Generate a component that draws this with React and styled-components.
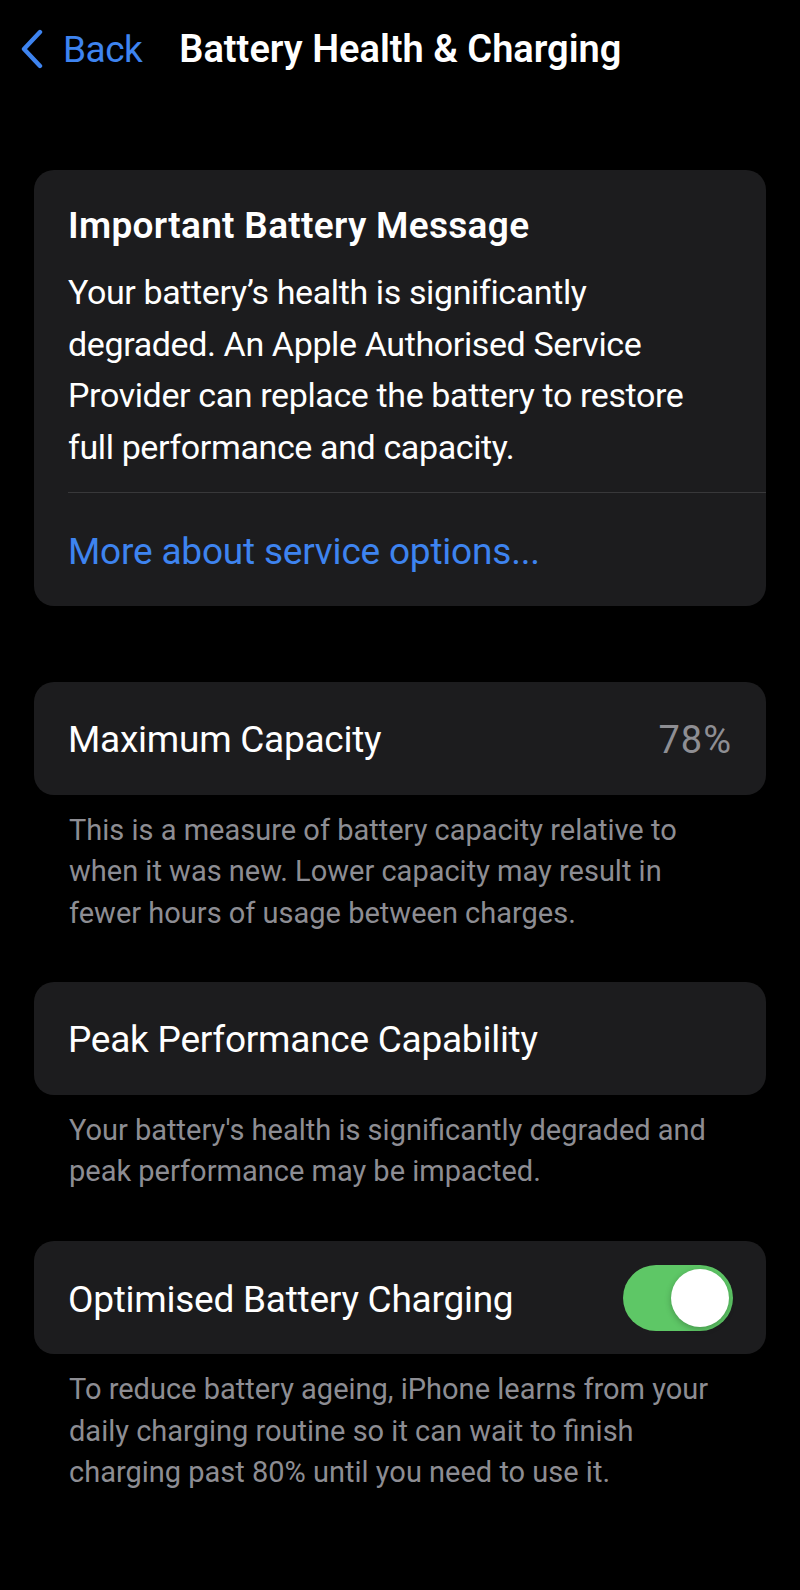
import React, { useState } from "react";
import styled, { createGlobalStyle } from "styled-components";

const GlobalStyle = createGlobalStyle`
  html, body {
    margin: 0;
    padding: 0;
    background: #000;
  }
  body {
    font-family: Roboto, "Noto Sans", sans-serif;
    color: #fff;
    -webkit-font-smoothing: antialiased;
  }
`;

const Page = styled.div`
  min-height: 1590px;
  background: #000;
  display: flex;
  flex-direction: column;
`;

const NavBar = styled.div`
  display: flex;
  align-items: center;
  height: 98px;
  padding-left: 20px;
`;

const BackButton = styled.button`
  display: flex;
  align-items: center;
  gap: 19px;
  background: none;
  border: 0;
  padding: 0;
  color: #3e84f0;
  font-family: inherit;
  font-size: 37px;
  letter-spacing: -0.5px;
  cursor: pointer;
`;

const NavTitle = styled.div`
  margin-left: 37px;
  font-size: 38px;
  font-weight: 600;
  color: #fff;
`;

const Content = styled.div`
  display: flex;
  flex-direction: column;
  padding: 72px 34px 0;
`;

const Card = styled.div`
  background: #1c1c1e;
  border-radius: 20px;
  margin-top: ${(p) => p.$top || 0}px;
`;

const MessageBody = styled.div`
  padding: 36px 0 28px 34px;
`;

const MessageTitle = styled.div`
  font-size: 37px;
  font-weight: 600;
  line-height: 40px;
  letter-spacing: 0.3px;
  padding-right: 40px;
`;

const MessageText = styled.div`
  margin-top: 21px;
  font-size: 34px;
  line-height: 51.5px;
  letter-spacing: -0.38px;
  padding-right: 58px;
`;

const Separator = styled.div`
  height: 1px;
  background: #38383a;
  margin: 19px 0 33px;
`;

const LinkText = styled.a`
  display: block;
  font-size: 37px;
  line-height: 51.5px;
  letter-spacing: -0.2px;
  color: #3e84f0;
  text-decoration: none;
`;

const Row = styled.div`
  display: flex;
  align-items: center;
  justify-content: space-between;
  height: 113px;
  padding: 0 33px 0 34px;
  box-sizing: border-box;
`;

const RowLabel = styled.div`
  font-size: 37px;
  letter-spacing: -0.25px;
  padding-top: 3px;
`;

const RowValue = styled.div`
  font-size: 38px;
  letter-spacing: 1px;
  color: #8e8e93;
  padding-top: 3px;
  margin-right: 1px;
`;

const Footer = styled.div`
  margin-top: 15px;
  padding: 0 30px 0 35px;
  font-size: 29px;
  line-height: 41.7px;
  letter-spacing: 0;
  color: #8d8d93;
`;

const Track = styled.button`
  position: relative;
  width: 110px;
  height: 66px;
  border-radius: 33px;
  border: 0;
  padding: 0;
  background: ${(p) => (p.$on ? "#5ec766" : "#39393d")};
  cursor: pointer;
  flex-shrink: 0;
`;

const Knob = styled.span`
  position: absolute;
  top: 4px;
  left: ${(p) => (p.$on ? "48px" : "4px")};
  width: 58px;
  height: 58px;
  border-radius: 50%;
  background: #fff;
  box-shadow: 0 2px 6px rgba(0, 0, 0, 0.25);
  transition: left 0.2s;
`;

const Chevron = () => (
  <svg width="24" height="40" viewBox="0 0 24 40" fill="none">
    <polyline
      points="20,3 4,20 20,37"
      stroke="#3e84f0"
      strokeWidth="4.4"
      strokeLinecap="round"
      strokeLinejoin="round"
    />
  </svg>
);

const Toggle = ({ on, onChange }) => (
  <Track $on={on} onClick={() => onChange(!on)}>
    <Knob $on={on} />
  </Track>
);

const App = () => {
  const [optimised, setOptimised] = useState(true);

  return (
    <>
      <GlobalStyle />
      <Page>
        <NavBar>
          <BackButton>
            <Chevron />
            Back
          </BackButton>
          <NavTitle>Battery Health &amp; Charging</NavTitle>
        </NavBar>

        <Content>
          <Card>
            <MessageBody>
              <MessageTitle>Important Battery Message</MessageTitle>
              <MessageText>
                Your battery’s health is significantly degraded. An Apple
                Authorised Service Provider can replace the battery to restore
                full performance and capacity.
              </MessageText>
              <Separator />
              <LinkText href="#">More about service options...</LinkText>
            </MessageBody>
          </Card>

          <Card $top={76}>
            <Row>
              <RowLabel>Maximum Capacity</RowLabel>
              <RowValue>78%</RowValue>
            </Row>
          </Card>
          <Footer>
            This is a measure of battery capacity relative to when it was new.
            Lower capacity may result in fewer hours of usage between charges.
          </Footer>

          <Card $top={47}>
            <Row>
              <RowLabel>Peak Performance Capability</RowLabel>
            </Row>
          </Card>
          <Footer>
            Your battery's health is significantly degraded and peak
            performance may be impacted.
          </Footer>

          <Card $top={48}>
            <Row>
              <RowLabel>Optimised Battery Charging</RowLabel>
              <Toggle on={optimised} onChange={setOptimised} />
            </Row>
          </Card>
          <Footer>
            To reduce battery ageing, iPhone learns from your daily charging
            routine so it can wait to finish charging past 80% until you need
            to use it.
          </Footer>
        </Content>
      </Page>
    </>
  );
};

export default App;
